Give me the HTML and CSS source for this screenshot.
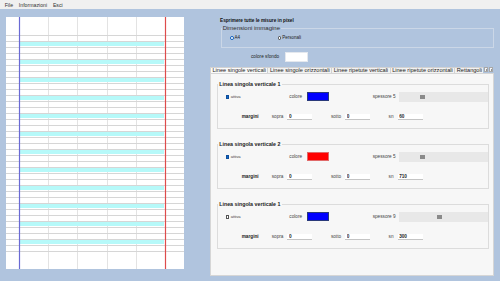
FILE: index.html
```html
<!DOCTYPE html>
<html lang="it">
  <head>
    <meta charset="UTF-8" />
    <title>Quaderno</title>
    <link rel="stylesheet" href="styles.css">
  </head>
  <body>
    <div class="menubar">
      <span class="menubar__item">File</span>
      <span class="menubar__item">Informazioni</span>
      <span class="menubar__item">Esci</span>
    </div>

    <div class="main">
      <div class="preview">
        <svg class="preview__sheet" width="178" height="252" viewBox="0 0 178 252">
          <defs>
            <pattern id="rows" x="0" y="18" width="178" height="18" patternUnits="userSpaceOnUse">
              <rect x="14" y="7" width="144" height="4" fill="#b6f9f9" />
              <rect x="0" y="0" width="178" height="1" fill="#d6d6d6" />
              <rect x="0" y="6" width="178" height="1" fill="#d6d6d6" />
              <rect x="0" y="12" width="178" height="1" fill="#d6d6d6" />
            </pattern>
          </defs>
          <g stroke="#e3e3e3" stroke-width="1">
            <line x1="42.5" y1="0" x2="42.5" y2="252" />
            <line x1="71.5" y1="0" x2="71.5" y2="252" />
            <line x1="101.5" y1="0" x2="101.5" y2="252" />
            <line x1="130.5" y1="0" x2="130.5" y2="252" />
          </g>
          <rect x="0" y="18" width="178" height="216" fill="url(#rows)" />
          <rect x="0" y="234" width="178" height="1" fill="#d6d6d6" />
          <line x1="13.5" y1="0" x2="13.5" y2="252" stroke="#6a6ad4" stroke-width="1.2" />
          <line x1="159.5" y1="0" x2="159.5" y2="252" stroke="#de4c4c" stroke-width="1.2" />
        </svg>
      </div>

      <div class="settings">
        <div class="settings__top">
          <div class="settings__hint">Esprimere tutte le misure in pixel</div>
          <fieldset class="size-box">
            <legend class="size-box__title">Dimensioni immagine</legend>
            <div class="size-box__row">
              <label class="size-box__option"><input class="radio" type="radio" name="size" checked>A4</label>
              <label class="size-box__option"><input class="radio" type="radio" name="size">Personali</label>
            </div>
          </fieldset>
          <div class="bg-row">
            <span class="bg-row__label">colore sfondo</span>
            <span class="bg-row__swatch"></span>
          </div>
        </div>

        <div class="tabs">
          <div class="tabs__list">
            <span class="tab tab--active">Linee singole verticali</span>
            <span class="tab">Linee singole orizzontali</span>
            <span class="tab">Linee ripetute verticali</span>
            <span class="tab">Linee ripetute orizzontali</span>
            <span class="tab">Rettangoli</span>
          </div>
          <div class="tabs__arrows">
            <span class="tabs__arrow tabs__arrow--left"></span>
            <span class="tabs__arrow tabs__arrow--right"></span>
          </div>
        </div>

        <div class="panel">
          <fieldset class="line">
            <legend class="line__title">Linea singola verticale 1</legend>
            <div class="line__row">
              <label class="line__active"><input class="check" type="checkbox" checked>attiva</label>
              <div class="line__color">
                <span class="line__color-label">colore</span>
                <span class="swatch swatch--blue"></span>
              </div>
              <div class="line__thick">
                <span>spessore 5</span>
                <input class="slider" type="range" min="0" max="20" value="5">
              </div>
            </div>
            <div class="line__row line__row--margins">
              <span class="line__margins-label">margini</span>
              <label class="field"><span class="field__label">sopra</span><input class="field__input" type="text" value="0"></label>
              <label class="field"><span class="field__label">sotto</span><input class="field__input" type="text" value="0"></label>
              <label class="field"><span class="field__label">sn</span><input class="field__input" type="text" value="60"></label>
            </div>
          </fieldset>

          <fieldset class="line">
            <legend class="line__title">Linea singola verticale 2</legend>
            <div class="line__row">
              <label class="line__active"><input class="check" type="checkbox" checked>attiva</label>
              <div class="line__color">
                <span class="line__color-label">colore</span>
                <span class="swatch swatch--red"></span>
              </div>
              <div class="line__thick">
                <span>spessore 5</span>
                <input class="slider" type="range" min="0" max="20" value="5">
              </div>
            </div>
            <div class="line__row line__row--margins">
              <span class="line__margins-label">margini</span>
              <label class="field"><span class="field__label">sopra</span><input class="field__input" type="text" value="0"></label>
              <label class="field"><span class="field__label">sotto</span><input class="field__input" type="text" value="0"></label>
              <label class="field"><span class="field__label">sn</span><input class="field__input" type="text" value="710"></label>
            </div>
          </fieldset>

          <fieldset class="line">
            <legend class="line__title">Linea singola verticale 1</legend>
            <div class="line__row">
              <label class="line__active"><input class="check" type="checkbox">attiva</label>
              <div class="line__color">
                <span class="line__color-label">colore</span>
                <span class="swatch swatch--blue"></span>
              </div>
              <div class="line__thick">
                <span>spessore 9</span>
                <input class="slider" type="range" min="0" max="20" value="9">
              </div>
            </div>
            <div class="line__row line__row--margins">
              <span class="line__margins-label">margini</span>
              <label class="field"><span class="field__label">sopra</span><input class="field__input" type="text" value="0"></label>
              <label class="field"><span class="field__label">sotto</span><input class="field__input" type="text" value="0"></label>
              <label class="field"><span class="field__label">sn</span><input class="field__input" type="text" value="300"></label>
            </div>
          </fieldset>
        </div>
      </div>
    </div>
  </body>
</html>
```

FILE: styles.css
```css
body {
  margin: 0;
  width: 500px;
  height: 281px;
  overflow: hidden;
  font-family: 'Liberation Sans', Arial, sans-serif;
  background: #b0c4de;
  color: #222;
}

.menubar {
  display: flex;
  align-items: center;
  gap: 5.8px;
  height: 9px;
  padding-left: 4.7px;
  background: #f0f0f0;
  font-size: 5.2px;
  color: #333;
}

.main {
  display: flex;
  height: 272px;
}

.preview {
  width: 210px;
  padding: 8px 0 0 6px;
  box-sizing: border-box;
}

.preview__sheet {
  display: block;
  background: #ffffff;
}

.settings {
  display: flex;
  flex-direction: column;
  width: 284px;
}

.settings__top {
  padding: 8.7px 0 0 10px;
}

.settings__hint {
  font-size: 4.7px;
  line-height: 6px;
  font-weight: bold;
  color: #111;
}

.size-box {
  margin: 0.6px 0 0 0.7px;
  padding: 2.4px 0 6.6px 0;
  min-width: 0;
  border: 1px solid #cbd7e7;
}

.size-box__title {
  padding: 0 1px;
  font-size: 6px;
  line-height: 8px;
  color: #2d2d2d;
}

.size-box__row {
  display: flex;
  align-items: center;
  height: 6px;
  padding-left: 8.3px;
}

.size-box__option {
  display: flex;
  align-items: center;
  width: 47.7px;
  font-size: 4.5px;
  color: #222;
}

.radio {
  appearance: none;
  -webkit-appearance: none;
  width: 3.8px;
  height: 3.8px;
  margin: 0 0.8px 0 0;
  border: 0.7px solid #444;
  border-radius: 50%;
  background: #fff;
  box-sizing: border-box;
}

.radio:checked {
  border: 0.9px solid #0b5fbf;
  background: radial-gradient(circle, #0b5fbf 0 40%, #ffffff 50%);
}

.bg-row {
  display: flex;
  align-items: center;
  margin-top: 3.4px;
  padding-left: 31px;
  font-size: 4.7px;
}

.bg-row__label {
  width: 34px;
}

.bg-row__swatch {
  width: 23px;
  height: 10px;
  background: #ffffff;
  box-sizing: border-box;
  border: 0.6px solid #e4e8ee;
}

.tabs {
  display: flex;
  height: 6.6px;
  margin-top: 5px;
  font-size: 5.6px;
}

.tabs__list {
  display: flex;
  flex: 1;
  overflow: hidden;
}

.tab {
  padding: 0 1.5px;
  margin-right: -1px;
  border: 1px solid #d2d2d2;
  border-bottom: none;
  background: #f2f2f2;
  line-height: 5.6px;
  white-space: nowrap;
  color: #222;
}

.tab--active {
  position: relative;
  z-index: 1;
  background: #fafafa;
}

.tabs__arrows {
  display: flex;
  align-items: center;
  gap: 0.6px;
  padding: 0 0.6px 0 1px;
}

.tabs__arrow {
  display: flex;
  align-items: center;
  justify-content: center;
  width: 4.4px;
  height: 5px;
  box-sizing: border-box;
  border: 0.6px solid #a8a8a8;
  background: #f5f5f5;
}

.tabs__arrow::before {
  content: '';
  border-top: 1px solid transparent;
  border-bottom: 1px solid transparent;
}

.tabs__arrow--left::before {
  border-right: 1.3px solid #333;
}

.tabs__arrow--right::before {
  border-left: 1.3px solid #333;
}

.panel {
  height: 202.7px;
  box-sizing: border-box;
  padding: 7.2px 3.7px 0 5.7px;
  border: 1px solid #d6d6d6;
  background: #f7f7f7;
}

.line {
  margin: 0 0 12.2px 0;
  padding: 3.5px 0 7.8px 0;
  min-width: 0;
  border: 1px solid #dcdcdc;
}

.line__title {
  padding: 0 1.5px;
  font-size: 5.3px;
  line-height: 7px;
  font-weight: bold;
  color: #1a1a1a;
}

.line__row {
  display: flex;
  align-items: center;
  height: 10px;
  font-size: 4.7px;
  color: #444;
}

.line__row--margins {
  height: 7px;
  margin-top: 11.5px;
}

.line__active {
  display: flex;
  align-items: center;
  width: 63.6px;
  margin-left: 8px;
  font-size: 4.2px;
}

.check {
  appearance: none;
  -webkit-appearance: none;
  width: 3.4px;
  height: 3.4px;
  margin: 0 1.6px 0 0;
  box-sizing: border-box;
  border: 0.7px solid #555;
  background: #fff;
}

.check:checked {
  border-color: #0e4f9c;
  background: #1468c8;
}

.line__color {
  display: flex;
  align-items: center;
  width: 83.4px;
}

.line__color-label {
  width: 17.4px;
}

.swatch {
  width: 22.3px;
  height: 9px;
  box-sizing: border-box;
  border: 0.8px solid #2a3a7a;
}

.swatch--blue {
  background: #0000ff;
}

.swatch--red {
  background: #ff0000;
  border-color: #e06a6a;
}

.line__thick {
  display: flex;
  flex: 1;
  align-items: center;
  justify-content: space-between;
  padding-right: 0.6px;
}

.slider {
  appearance: none;
  -webkit-appearance: none;
  width: 88.7px;
  height: 9.3px;
  margin: 0;
  background: #e8e8e8;
}

.slider::-webkit-slider-runnable-track {
  height: 9.3px;
  background: #e8e8e8;
}

.slider::-webkit-slider-thumb {
  -webkit-appearance: none;
  width: 4.7px;
  height: 4.5px;
  margin-top: 2.4px;
  border: none;
  background: #8a8a8a;
}

.line__margins-label {
  width: 30px;
  margin-left: 24px;
  font-weight: bold;
  color: #222;
}

.field {
  display: flex;
  align-items: center;
  margin-right: 18.5px;
}

.field__label {
  margin-right: 4px;
}

.field__input {
  width: 25px;
  height: 6.7px;
  padding: 0 0 0 1.6px;
  box-sizing: border-box;
  border: none;
  border-bottom: 0.6px solid #c4c4c4;
  background: #ffffff;
  font-family: inherit;
  font-size: 4.7px;
  font-weight: bold;
  color: #222;
}
```
